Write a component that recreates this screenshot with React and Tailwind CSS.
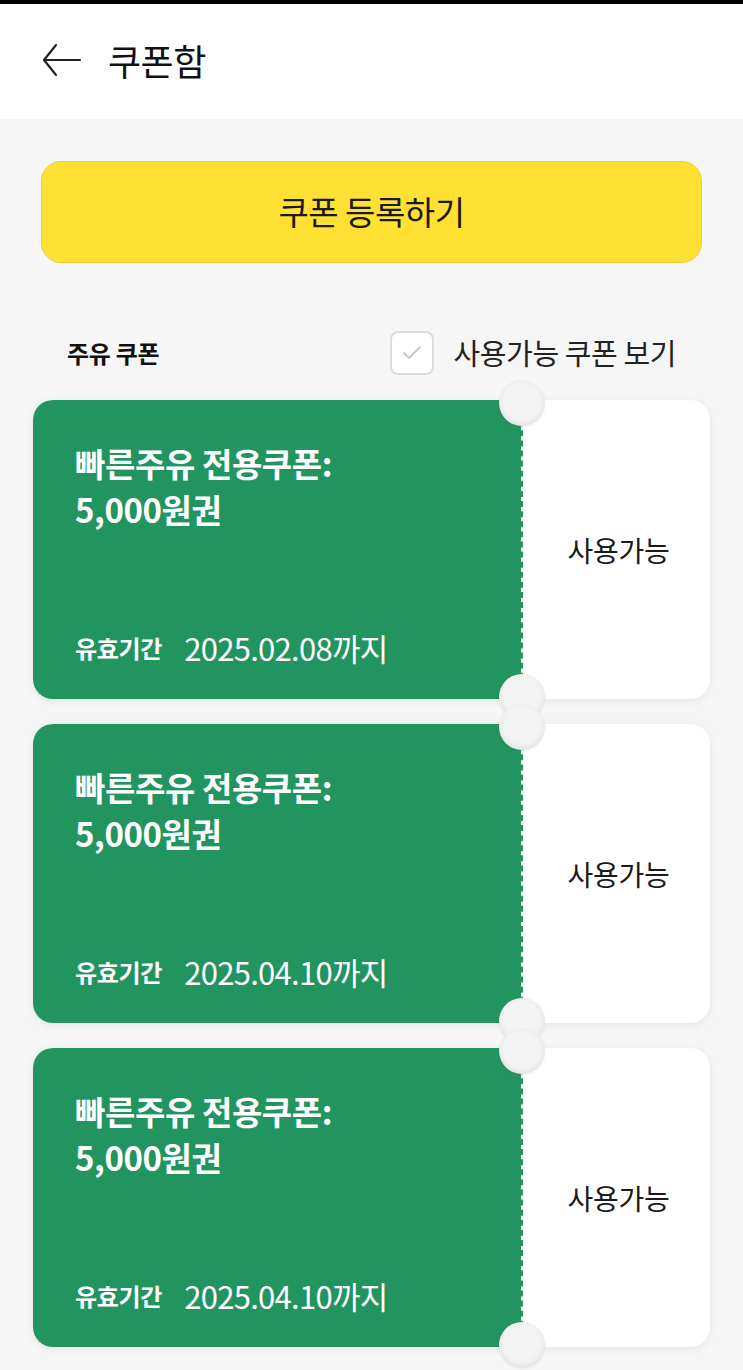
import { Check } from 'lucide-react';

const coupons = [
  { id: 1, until: '2025.02.08까지' },
  { id: 2, until: '2025.04.10까지' },
  { id: 3, until: '2025.04.10까지' },
];

function Notch({ pos }) {
  return (
    <div
      className={`absolute left-[466px] w-[46px] h-[46px] rounded-full bg-[#f3f3f3] shadow-[inset_0_-2px_6px_rgba(0,0,0,0.08),0_1px_3px_rgba(0,0,0,0.06)] ${pos}`}
    />
  );
}

function CouponCard({ until }) {
  return (
    <div className="relative flex h-[299px] rounded-[20px] shadow-[0_2px_10px_rgba(0,0,0,0.07)]">
      <div className="w-[488px] bg-[#21945f] rounded-l-[20px] pl-[42px] pt-[40px] pb-[28px] flex flex-col justify-between text-white">
        <div className="text-[33px] font-bold leading-[46px] tracking-[-0.4px]">
          <p>빠른주유 전용쿠폰:</p>
          <p>5,000원권</p>
        </div>
        <div className="flex items-center gap-[22px]">
          <span className="text-[24px] font-bold tracking-[-0.3px]">유효기간</span>
          <span className="text-[31px] tracking-[-0.7px]">{until}</span>
        </div>
      </div>
      <div className="flex-1 bg-white rounded-r-[20px] border-l-2 border-dashed border-[#21945f] flex items-center justify-center pr-[2px]">
        <span className="text-[28px] text-[#1a1a1a] pl-[6px] tracking-[-0.3px]">사용가능</span>
      </div>
      <Notch pos="top-[-20px]" />
      <Notch pos="bottom-[-21px]" />
    </div>
  );
}

export default function App() {
  return (
    <div className="min-h-[1370px] bg-[#f6f6f6] font-['Noto_Sans_CJK_KR','Noto_Sans',sans-serif] overflow-hidden">
      <div className="h-[4px] bg-black" />
      <header className="h-[115px] bg-white flex items-center pl-[42px] gap-[26px] pb-[4px]">
        <svg width="40" height="34" viewBox="0 0 40 34" fill="none" stroke="#222" strokeWidth="2.2" strokeLinecap="round" strokeLinejoin="round">
          <path d="M14 2 L2 17 L14 32" />
          <path d="M2 17 H38" />
        </svg>
        <h1 className="text-[36px] text-[#111] tracking-[-0.5px]">쿠폰함</h1>
      </header>

      <main className="px-[33px] pt-[42px]">
        <div className="px-[8px]">
          <button className="w-full h-[102px] rounded-[20px] bg-[#fee133] border border-[#ecd03a] text-[33px] text-[#1a1a1a] tracking-[-0.5px]">
            쿠폰 등록하기
          </button>
        </div>

        <div className="flex items-center justify-between mt-[68px] pl-[34px] pr-[34px] h-[44px]">
          <span className="text-[24px] font-bold text-[#111] tracking-[-0.3px]">주유 쿠폰</span>
          <label className="flex items-center gap-[20px]">
            <span className="w-[44px] h-[44px] rounded-[8px] border-2 border-[#dcdcdc] bg-white flex items-center justify-center">
              <Check size={24} strokeWidth={2} className="text-[#c8c8c8]" />
            </span>
            <span className="text-[29px] text-[#222] tracking-[-0.4px]">사용가능 쿠폰 보기</span>
          </label>
        </div>

        <div className="flex flex-col gap-[25px] mt-[25px]">
          {coupons.map((c) => (
            <CouponCard key={c.id} until={c.until} />
          ))}
        </div>
      </main>
    </div>
  );
}
